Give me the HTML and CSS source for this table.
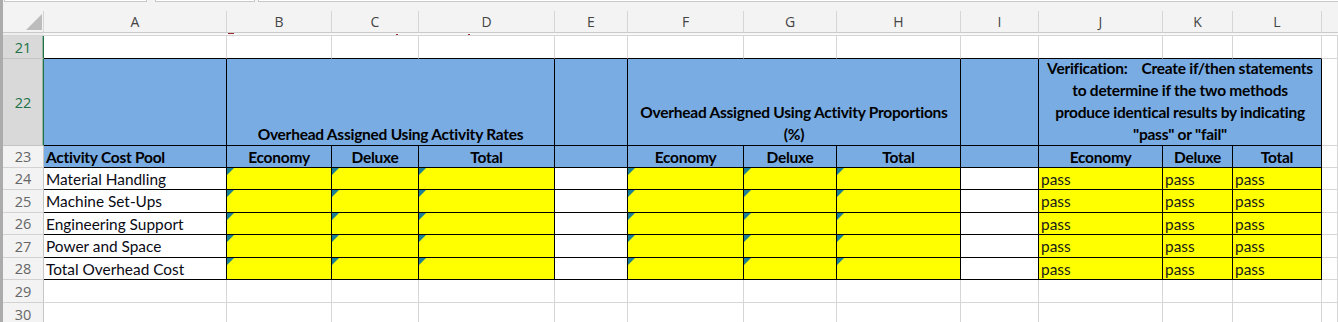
FILE: index.html
```html
<!DOCTYPE html>
<html>
<head>
<meta charset="utf-8">
<link rel="stylesheet" href="styles.css">
</head>
<body>
<div class="app">
  <div class="edge"></div>
  <div class="main">
    <div class="toolbar"><span class="tb tb1"></span><span class="tb tb2"></span><span class="tb tb3"></span></div>
    <div class="sheet">
      <!-- column headers -->
      <div class="corner"><span class="tri"></span></div>
      <div class="ch">A</div><div class="ch">B</div><div class="ch">C</div><div class="ch">D</div><div class="ch">E</div><div class="ch">F</div><div class="ch">G</div><div class="ch">H</div><div class="ch">I</div><div class="ch">J</div><div class="ch">K</div><div class="ch">L</div><div class="ch last"></div>
      <!-- gap under headers -->
      <div class="gap gaprh"></div>
      <div class="gap"></div><div class="gap"><i class="mk mk1"></i></div><div class="gap"><i class="mk mk2"></i></div><div class="gap"><i class="mk mk3"></i></div><div class="gap"></div><div class="gap"></div><div class="gap"></div><div class="gap"></div><div class="gap"></div><div class="gap"></div><div class="gap"></div><div class="gap"></div><div class="gap"></div>
      <!-- row 21 -->
      <div class="rh sel">21</div>
      <div class="g bb"></div><div class="g bb"></div><div class="g bb"></div><div class="g bb"></div><div class="g bb"></div><div class="g bb"></div><div class="g bb"></div><div class="g bb"></div><div class="g bb"></div><div class="g bb"></div><div class="g bb"></div><div class="g bb"></div><div class="g"></div>
      <!-- row 22 -->
      <div class="rh sel">22</div>
      <div class="h bk"></div>
      <div class="h bk s3"><span>Overhead Assigned Using Activity Rates</span></div>
      <div class="h bk"></div>
      <div class="h bk s3"><span>Overhead Assigned Using Activity Proportions<br>(%)</span></div>
      <div class="h bk"></div>
      <div class="h bk s3"><span>Verification:&nbsp;&nbsp;&nbsp; Create if/then statements<br>to determine if the two methods<br>produce identical results by indicating<br>"pass" or "fail"</span></div>
      <div class="g"></div>
      <!-- row 23 -->
      <div class="rh">23</div>
      <div class="hd bk left">Activity Cost Pool</div>
      <div class="hd bk">Economy</div><div class="hd bk">Deluxe</div><div class="hd bk">Total</div>
      <div class="hd bk"></div>
      <div class="hd bk">Economy</div><div class="hd bk">Deluxe</div><div class="hd bk">Total</div>
      <div class="hd bk"></div>
      <div class="hd bk">Economy</div><div class="hd bk">Deluxe</div><div class="hd bk">Total</div>
      <div class="g"></div>
      <!-- row 24 -->
      <div class="rh">24</div>
      <div class="d bk left">Material Handling</div>
      <div class="d bk y err"></div><div class="d bk y err"></div><div class="d bk y err"></div>
      <div class="d bk"></div>
      <div class="d bk y err"></div><div class="d bk y err"></div><div class="d bk y err"></div>
      <div class="d bk"></div>
      <div class="d bk y ps">pass</div><div class="d bk y ps">pass</div><div class="d bk y ps">pass</div>
      <div class="g"></div>
      <!-- row 25 -->
      <div class="rh">25</div>
      <div class="d bk left">Machine Set-Ups</div>
      <div class="d bk y err"></div><div class="d bk y err"></div><div class="d bk y err"></div>
      <div class="d bk"></div>
      <div class="d bk y err"></div><div class="d bk y err"></div><div class="d bk y err"></div>
      <div class="d bk"></div>
      <div class="d bk y ps">pass</div><div class="d bk y ps">pass</div><div class="d bk y ps">pass</div>
      <div class="g"></div>
      <!-- row 26 -->
      <div class="rh">26</div>
      <div class="d bk left">Engineering Support</div>
      <div class="d bk y err"></div><div class="d bk y err"></div><div class="d bk y err"></div>
      <div class="d bk"></div>
      <div class="d bk y err"></div><div class="d bk y err"></div><div class="d bk y err"></div>
      <div class="d bk"></div>
      <div class="d bk y ps">pass</div><div class="d bk y ps">pass</div><div class="d bk y ps">pass</div>
      <div class="g"></div>
      <!-- row 27 -->
      <div class="rh">27</div>
      <div class="d bk left">Power and Space</div>
      <div class="d bk y err"></div><div class="d bk y err"></div><div class="d bk y err"></div>
      <div class="d bk"></div>
      <div class="d bk y err"></div><div class="d bk y err"></div><div class="d bk y err"></div>
      <div class="d bk"></div>
      <div class="d bk y ps">pass</div><div class="d bk y ps">pass</div><div class="d bk y ps">pass</div>
      <div class="g"></div>
      <!-- row 28 -->
      <div class="rh">28</div>
      <div class="d bk left">Total Overhead Cost</div>
      <div class="d bk y err"></div><div class="d bk y err"></div><div class="d bk y err"></div>
      <div class="d bk"></div>
      <div class="d bk y err"></div><div class="d bk y err"></div><div class="d bk y err"></div>
      <div class="d bk"></div>
      <div class="d bk y ps">pass</div><div class="d bk y ps">pass</div><div class="d bk y ps">pass</div>
      <div class="g"></div>
      <!-- row 29 -->
      <div class="rh">29</div>
      <div class="g"></div><div class="g"></div><div class="g"></div><div class="g"></div><div class="g"></div><div class="g"></div><div class="g"></div><div class="g"></div><div class="g"></div><div class="g"></div><div class="g"></div><div class="g"></div><div class="g"></div>
      <!-- row 30 -->
      <div class="rh">30</div>
      <div class="g"></div><div class="g"></div><div class="g"></div><div class="g"></div><div class="g"></div><div class="g"></div><div class="g"></div><div class="g"></div><div class="g"></div><div class="g"></div><div class="g"></div><div class="g"></div><div class="g"></div>
    </div>
  </div>
</div>
</body>
</html>
```

FILE: styles.css
```css
html, body {
  margin: 0;
  padding: 0;
  background: #ffffff;
}
body {
  width: 1338px;
  height: 322px;
  overflow: hidden;
  font-family: "Lato", "Liberation Sans", sans-serif;
}
.app {
  display: flex;
  height: 322px;
  overflow: hidden;
}
.edge {
  flex: none;
  width: 3px;
  background: #ababab;
}
.main {
  flex: 1;
  min-width: 0;
  display: flex;
  flex-direction: column;
}
.toolbar {
  flex: none;
  height: 11px;
  background: #f3f3f3;
  display: flex;
  align-items: flex-start;
}
.tb {
  display: block;
  box-sizing: border-box;
  height: 2px;
  background: #ffffff;
  border: 1px solid #c8c8c8;
  border-top: 0;
}
.tb1 { margin-left: 1px; width: 143px; }
.tb2 { margin-left: 8px; width: 100px; }
.tb3 { margin-left: 3px; flex: 1; border-right: 0; }

.sheet {
  display: grid;
  grid-template-columns: 41px 183px 105px 87px 136px 73px 116px 93px 124px 78px 124px 70px 89px 1fr;
  grid-template-rows: 22px 3px 23px 87px 22px 22px 23px 22px 23px 22px 23px 23px;
}
.sheet > div {
  box-sizing: border-box;
  min-width: 0;
  border-right: 1px solid #d6d6d6;
  border-bottom: 1px solid #d6d6d6;
}

/* column headers */
.corner {
  background: #f3f3f3;
  display: flex;
  justify-content: flex-end;
  align-items: flex-end;
  padding: 0 1px 2px 0;
}
.tri {
  display: block;
  width: 0;
  height: 0;
  border-left: 16px solid transparent;
  border-bottom: 16px solid #bcbcbc;
}
.sheet > .ch, .sheet > .corner {
  border-bottom-color: #c9c9c9;
}
.ch {
  background: #f3f3f3;
  color: #444444;
  font-family: "Open Sans", "Noto Sans", sans-serif;
  font-size: 14px;
  display: flex;
  align-items: center;
  justify-content: center;
}
.sheet > .ch.last { border-right: 0; }

/* thin band under headers */
.sheet > .gap {
  background: #f8f8f8;
  border-right: 0;
  border-bottom-color: #d6d6d6;
}
.sheet > .gaprh { background: #eeeeee; }
.mk {
  display: block;
  height: 1px;
  background: #9c2b2b;
}
.mk1 { margin-left: 1px; width: 6px; }
.mk2 { margin-left: 64px; margin-top: 1px; width: 2px; }
.mk3 { margin-left: 49px; margin-top: 1px; width: 2px; }

/* row headers */
.rh {
  background: #f3f3f3;
  color: #666666;
  font-family: "Open Sans", "Noto Sans", sans-serif;
  font-size: 14.5px;
  display: flex;
  align-items: center;
  justify-content: center;
}
.sheet > .rh { border-right-color: #c6c6c6; border-bottom-color: #d2d2d2; }
.sheet > .rh.sel {
  background: #d9d9d9;
  color: #217346;
  border-right: 1px solid #217346;
  box-shadow: inset -1px 0 0 rgba(33, 115, 70, 0.35);
  border-bottom-color: #c4c4c4;
}

/* cells */
.g { background: #ffffff; }
.sheet > .bb { border-bottom-color: #000000; }
.sheet > .bk { border-right-color: #000000; border-bottom-color: #000000; }

.h {
  background: #79ace3;
  font-weight: 700;
  font-size: 15.5px;
  letter-spacing: -0.25px;
  color: #000000;
  line-height: 22px;
  text-align: center;
  white-space: nowrap;
  display: flex;
  flex-direction: column;
  justify-content: flex-end;
  align-items: center;
}
.s3 { grid-column: span 3; }

.hd {
  background: #79ace3;
  font-weight: 700;
  font-size: 15.5px;
  letter-spacing: -0.25px;
  color: #000000;
  line-height: 20px;
  white-space: nowrap;
  display: flex;
  align-items: center;
  justify-content: center;
}
.d {
  background: #ffffff;
  font-size: 15.4px;
  color: #0a0a14;
  line-height: 20px;
  white-space: nowrap;
  display: flex;
  align-items: center;
}
.left {
  justify-content: flex-start;
  padding-left: 2px;
}
.y { background: #ffff00; }
.ps {
  padding-left: 2px;
  color: #1a1a1a;
}
.err { position: relative; }
.err::before {
  content: "";
  position: absolute;
  top: 0;
  left: 0;
  width: 0;
  height: 0;
  border-top: 7px solid #1d8196;
  border-right: 7px solid transparent;
}
```
